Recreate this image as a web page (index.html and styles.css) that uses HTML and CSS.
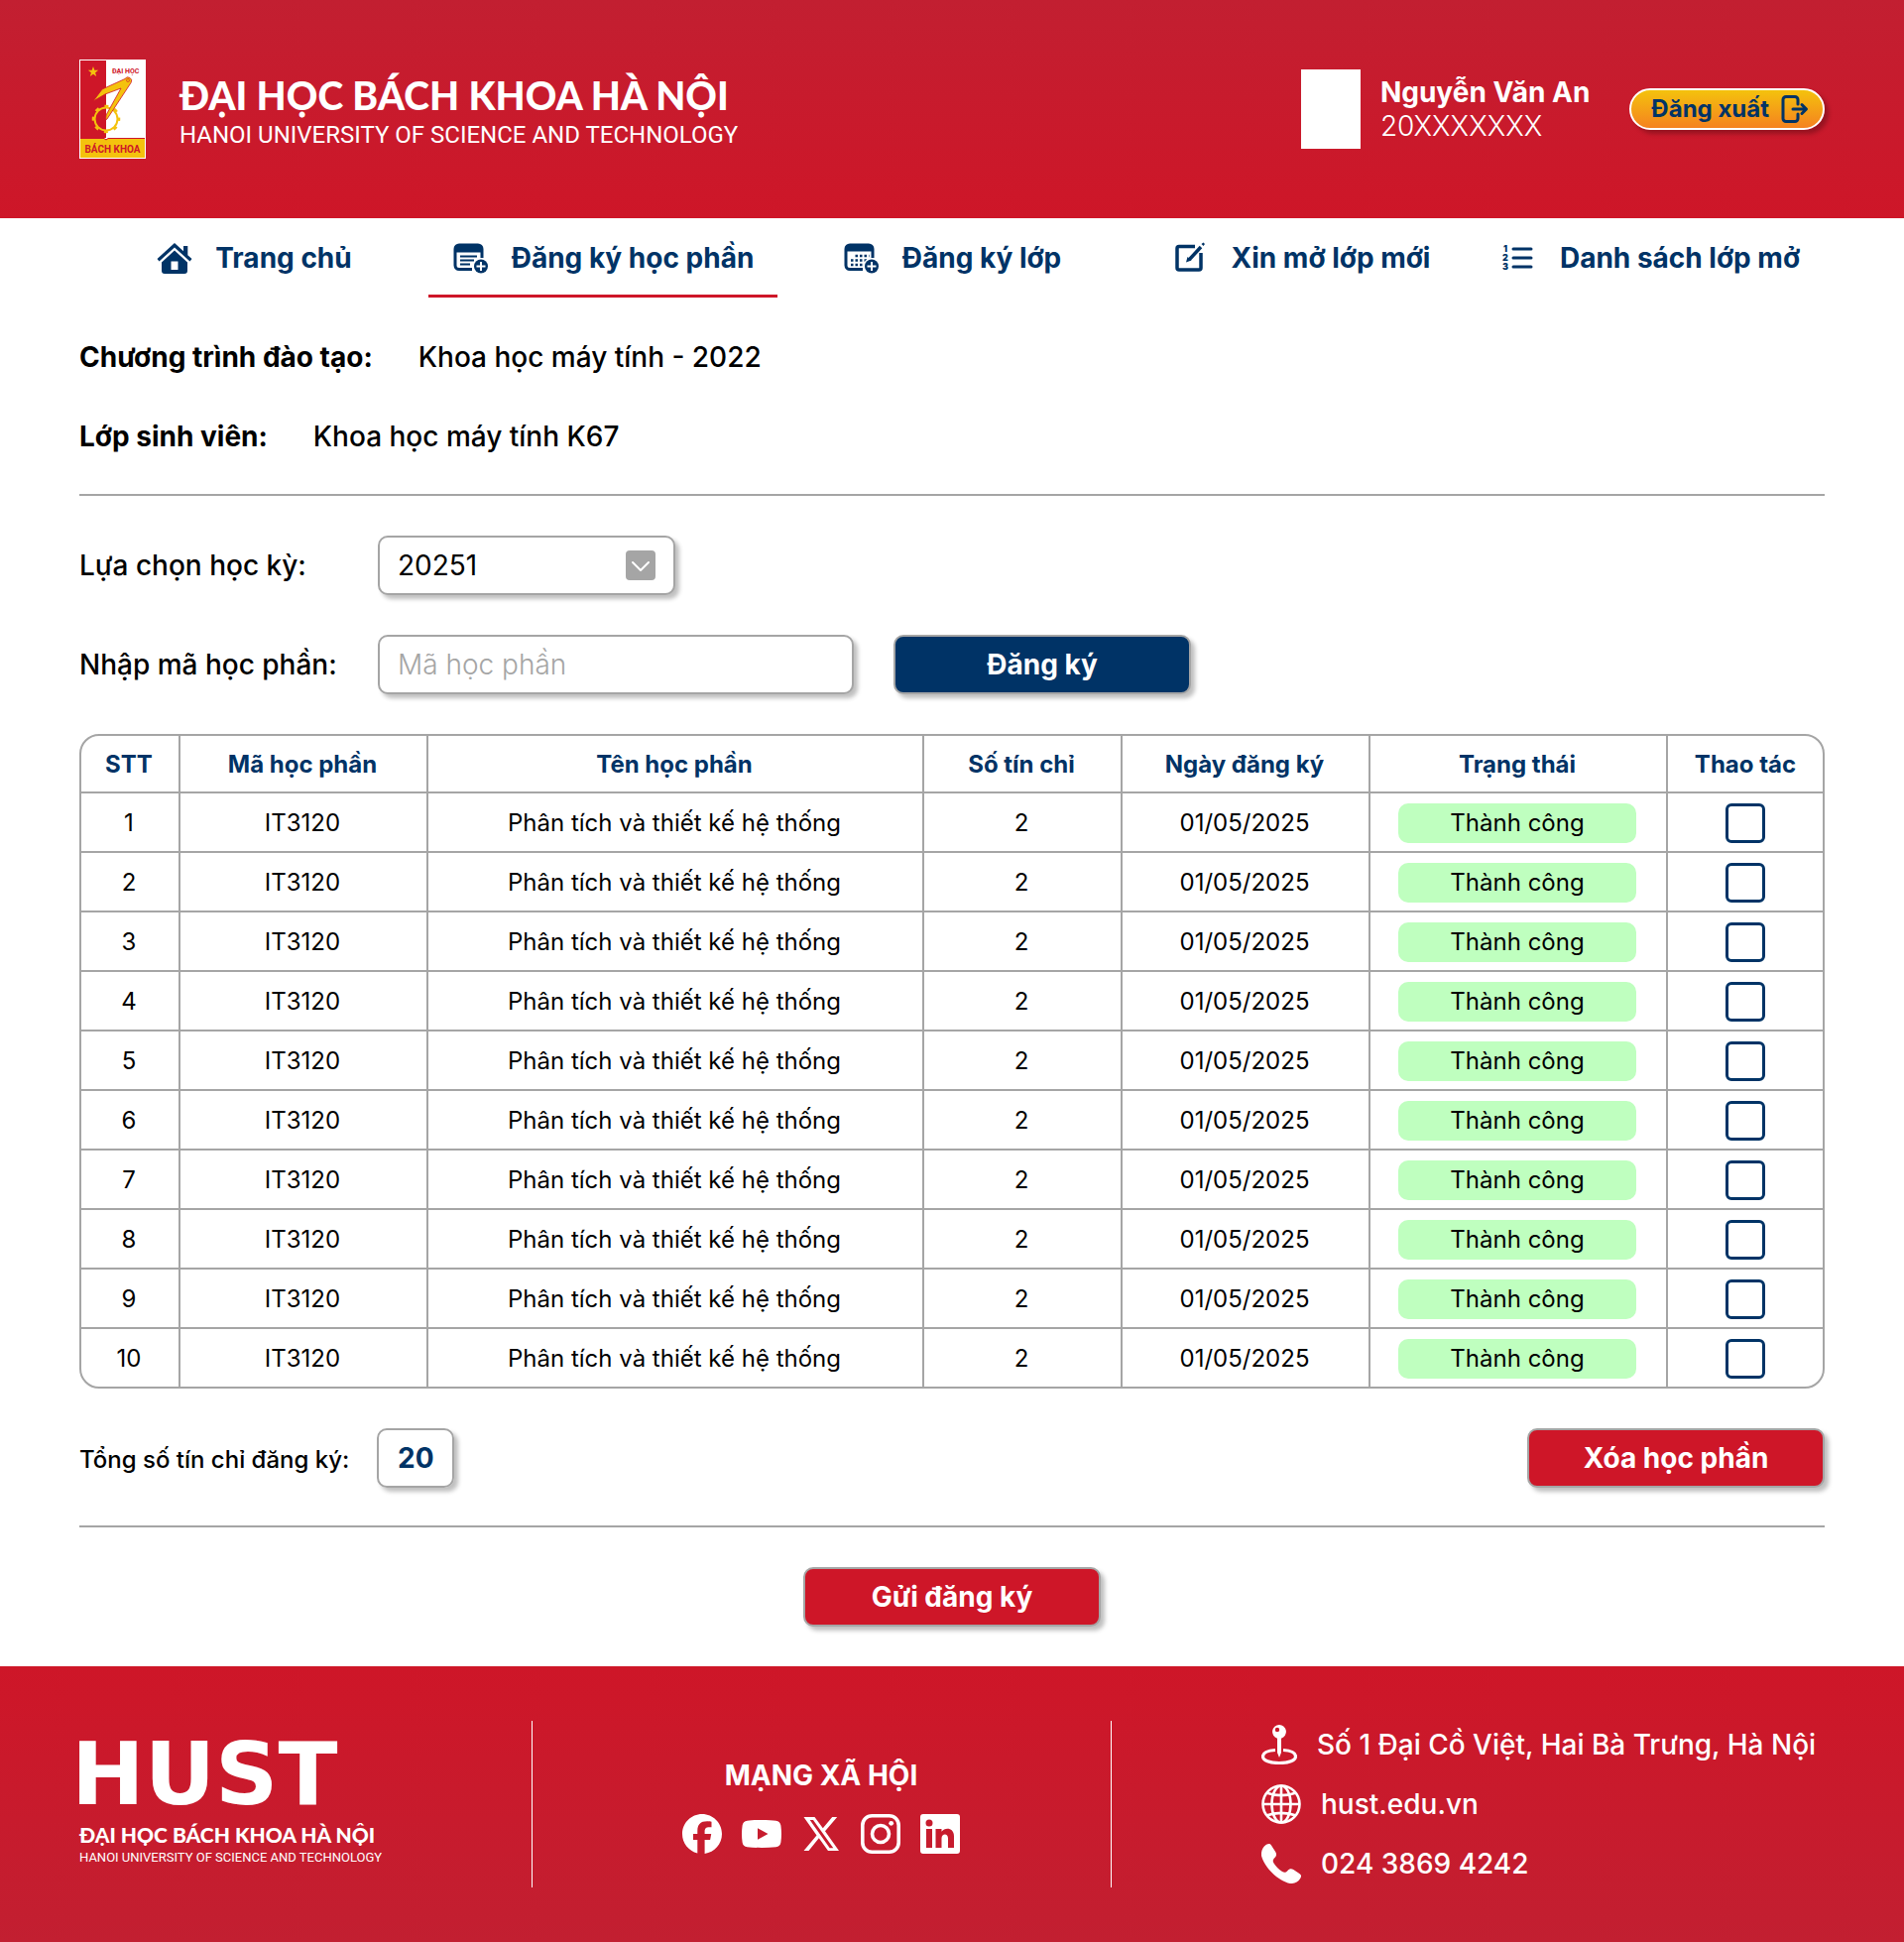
FILE: index.html
```html
<!DOCTYPE html>
<html lang="vi">
<head>
<meta charset="utf-8">
<meta name="viewport" content="width=device-width, initial-scale=1">
<title>Đăng ký học phần</title>
<link rel="stylesheet" href="styles.css">
</head>
<body>
<header class="site-header">
  <a class="brand" href="#">
    <svg class="emblem" viewBox="0 0 67 100" aria-hidden="true">
      <rect width="67" height="100" fill="#fff"/>
      <rect x="1" y="1" width="26" height="78" fill="#ce1628"/>
      <rect x="1" y="80" width="65" height="19" fill="#f4c20d"/>
      <path d="M1 79.500H25L27 81l2-1.500H66" fill="none" stroke="#ce1628"/>
      <path d="M14 7l1.300 3.700 3.900.1-3.100 2.400 1.100 3.800-3.200-2.200-3.200 2.200 1.100-3.800-3.100-2.400 3.900-.1z" fill="#f4c20d"/>
      <circle cx="27" cy="60" r="11.500" fill="none" stroke="#f4c20d" stroke-width="2"/>
      <circle cx="27" cy="60" r="13" fill="none" stroke="#f4c20d" stroke-width="2.500" stroke-dasharray="4 6.210" stroke-dashoffset="2"/>
      <path d="M46 19.500a3.600 3.600 0 1 1 6 4L28 60l-1.500 1 .5-5 15-27-16 6-12 7 9-12z" fill="#f4c20d" stroke="#ce1628" stroke-width=".8"/>
      <circle cx="49" cy="21" r="1.500" fill="none" stroke="#ce1628" stroke-width=".6"/>
      <text x="33" y="13.500" class="emblem-top">ĐẠI HỌC</text>
      <text x="33.500" y="94" class="emblem-name">BÁCH KHOA</text>
    </svg>
    <span class="wordmark">
      <span class="wordmark-vi">ĐẠI HỌC BÁCH KHOA HÀ NỘI</span>
      <span class="wordmark-en">HANOI UNIVERSITY OF SCIENCE AND TECHNOLOGY</span>
    </span>
  </a>
  <div class="account">
    <div class="avatar"></div>
    <div class="student">
      <div class="student-name">Nguyễn Văn An</div>
      <div class="student-id">20XXXXXXX</div>
    </div>
    <button class="logout" type="button">Đăng xuất
      <svg width="28" height="28" viewBox="0 0 28 28" fill="none" stroke="currentColor" stroke-width="3" stroke-linecap="round" stroke-linejoin="round" aria-hidden="true"><path d="M17 9V4.500a3 3 0 0 0-3-3H5a3 3 0 0 0-3 3v19a3 3 0 0 0 3 3h9a3 3 0 0 0 3-3V19M12 14h13M21 9.500l4.500 4.500-4.500 4.500"/></svg>
    </button>
  </div>
</header>

<nav class="main-nav">
  <a href="#"><svg viewBox="0 0 40 40" fill="currentColor" aria-hidden="true"><path d="M19 5L1.500 21l2 2.500L19 9.500l15.500 14 2-2.500-4.200-3.800V8H28v5.200z"/><path d="M19 12.500L6 24.500v8.500a3 3 0 0 0 3 3h20a3 3 0 0 0 3-3V24.500zm3.500 19.500h-7V23.500h7z"/></svg>Trang chủ</a>
  <a class="active" href="#" aria-current="page"><svg viewBox="0 0 40 40" fill="none" stroke="currentColor" aria-hidden="true"><path d="M20 31.500H7a4 4 0 0 1-4-4V11a4 4 0 0 1 4-4h19a4 4 0 0 1 4 4v9" stroke-width="3"/><path d="M3 14V11a4 4 0 0 1 4-4h19a4 4 0 0 1 4 4v3z" fill="currentColor"/><path d="M8 18.500h17M8 22.500h14M8 26.500h10" stroke-width="2"/><circle cx="29" cy="28.500" r="8.500" fill="#fff" stroke="none"/><circle cx="29" cy="28.500" r="7" fill="currentColor" stroke="none"/><path d="M29 24v9M24.500 28.500h9" stroke="#fff" stroke-width="2"/></svg>Đăng ký học phần</a>
  <a href="#"><svg viewBox="0 0 40 40" fill="none" stroke="currentColor" aria-hidden="true"><path d="M20 31.500H7a4 4 0 0 1-4-4V11a4 4 0 0 1 4-4h19a4 4 0 0 1 4 4v9" stroke-width="3"/><path d="M3 13V11a4 4 0 0 1 4-4h19a4 4 0 0 1 4 4v2z" fill="currentColor"/><path d="M12.500 18h14M8 22.500h18M8 27h12" stroke-width="2.500" stroke-dasharray="2.500 2"/><circle cx="29" cy="28.500" r="8.500" fill="#fff" stroke="none"/><circle cx="29" cy="28.500" r="7" fill="currentColor" stroke="none"/><path d="M29 24v9M24.500 28.500h9" stroke="#fff" stroke-width="2"/></svg>Đăng ký lớp</a>
  <a href="#"><svg viewBox="0 0 40 40" fill="none" stroke="currentColor" stroke-width="3.500" aria-hidden="true"><path d="M23 8.500H7a2 2 0 0 0-2 2v19.500a2 2 0 0 0 2 2h20a2 2 0 0 0 2-2V15"/><path d="M29 9L17.500 21.500"/><path d="M15.500 19l4 3.500-5.500 2zM29.500 6l2-1.500 1.500 1.500-1.500 2z" fill="currentColor" stroke="none"/></svg>Xin mở lớp mới</a>
  <a href="#"><svg viewBox="0 0 40 40" aria-hidden="true"><path d="M13 11h18M13 20h18M13 29h18" stroke="currentColor" stroke-width="3" stroke-linecap="round"/><g class="list-digits"><text x="5" y="14">1</text><text x="5" y="23">2</text><text x="5" y="32">3</text></g></svg>Danh sách lớp mở</a>
</nav>

<main class="content">
  <dl class="profile">
    <div><dt>Chương trình đào tạo:</dt><dd>Khoa học máy tính - 2022</dd></div>
    <div><dt>Lớp sinh viên:</dt><dd>Khoa học máy tính K67</dd></div>
  </dl>
  <hr>
  <form class="register">
    <label for="term">Lựa chọn học kỳ:</label>
    <div class="row">
      <span class="select-box">
        <select id="term" class="field"><option>20251</option></select>
        <svg viewBox="0 0 30 30" aria-hidden="true"><rect width="30" height="30" rx="4" fill="#a5a5a5"/><path d="M7 12l8 8 8-8" fill="none" stroke="#fff" stroke-width="2" stroke-linecap="round" stroke-linejoin="round"/></svg>
      </span>
    </div>
    <label for="code">Nhập mã học phần:</label>
    <div class="row">
      <input id="code" class="field code" type="text" placeholder="Mã học phần">
      <button class="btn btn-navy" type="button">Đăng ký</button>
    </div>
  </form>

  <div class="table-frame">
    <table>
      <colgroup><col class="c-index"><col class="c-code"><col><col class="c-credit"><col class="c-date"><col class="c-status"><col class="c-action"></colgroup>
      <thead><tr><th scope="col">STT</th><th scope="col">Mã học phần</th><th scope="col">Tên học phần</th><th scope="col">Số tín chỉ</th><th scope="col">Ngày đăng ký</th><th scope="col">Trạng thái</th><th scope="col">Thao tác</th></tr></thead>
      <tbody>
        <tr><td>1</td><td>IT3120</td><td>Phân tích và thiết kế hệ thống</td><td>2</td><td>01/05/2025</td><td><span class="badge">Thành công</span></td><td><input type="checkbox" aria-label="Chọn học phần 1"></td></tr>
        <tr><td>2</td><td>IT3120</td><td>Phân tích và thiết kế hệ thống</td><td>2</td><td>01/05/2025</td><td><span class="badge">Thành công</span></td><td><input type="checkbox" aria-label="Chọn học phần 2"></td></tr>
        <tr><td>3</td><td>IT3120</td><td>Phân tích và thiết kế hệ thống</td><td>2</td><td>01/05/2025</td><td><span class="badge">Thành công</span></td><td><input type="checkbox" aria-label="Chọn học phần 3"></td></tr>
        <tr><td>4</td><td>IT3120</td><td>Phân tích và thiết kế hệ thống</td><td>2</td><td>01/05/2025</td><td><span class="badge">Thành công</span></td><td><input type="checkbox" aria-label="Chọn học phần 4"></td></tr>
        <tr><td>5</td><td>IT3120</td><td>Phân tích và thiết kế hệ thống</td><td>2</td><td>01/05/2025</td><td><span class="badge">Thành công</span></td><td><input type="checkbox" aria-label="Chọn học phần 5"></td></tr>
        <tr><td>6</td><td>IT3120</td><td>Phân tích và thiết kế hệ thống</td><td>2</td><td>01/05/2025</td><td><span class="badge">Thành công</span></td><td><input type="checkbox" aria-label="Chọn học phần 6"></td></tr>
        <tr><td>7</td><td>IT3120</td><td>Phân tích và thiết kế hệ thống</td><td>2</td><td>01/05/2025</td><td><span class="badge">Thành công</span></td><td><input type="checkbox" aria-label="Chọn học phần 7"></td></tr>
        <tr><td>8</td><td>IT3120</td><td>Phân tích và thiết kế hệ thống</td><td>2</td><td>01/05/2025</td><td><span class="badge">Thành công</span></td><td><input type="checkbox" aria-label="Chọn học phần 8"></td></tr>
        <tr><td>9</td><td>IT3120</td><td>Phân tích và thiết kế hệ thống</td><td>2</td><td>01/05/2025</td><td><span class="badge">Thành công</span></td><td><input type="checkbox" aria-label="Chọn học phần 9"></td></tr>
        <tr><td>10</td><td>IT3120</td><td>Phân tích và thiết kế hệ thống</td><td>2</td><td>01/05/2025</td><td><span class="badge">Thành công</span></td><td><input type="checkbox" aria-label="Chọn học phần 10"></td></tr>
      </tbody>
    </table>
  </div>

  <div class="summary">
    <div class="total"><span class="total-label">Tổng số tín chỉ đăng ký:</span><output class="total-value">20</output></div>
    <button class="btn btn-red" type="button">Xóa học phần</button>
  </div>
  <hr>
  <div class="submit-row"><button class="btn btn-red" type="button">Gửi đăng ký</button></div>
</main>

<footer class="site-footer">
  <div class="footer-brand">
    <svg class="hust" viewBox="0 0 304 60"><text x="-8" y="62">HUST</text></svg>
    <div class="footer-vi">ĐẠI HỌC BÁCH KHOA HÀ NỘI</div>
    <div class="footer-en">HANOI UNIVERSITY OF SCIENCE AND TECHNOLOGY</div>
  </div>
  <div class="rule"></div>
  <div class="social">
    <h2>MẠNG XÃ HỘI</h2>
    <div class="social-links">
      <a href="#" aria-label="Facebook"><svg viewBox="0 0 40 40" fill="currentColor"><path d="M40 20.100C40 9 31 0 20 0S0 9 0 20.100C0 29.500 6.500 37.400 15.300 39.600V26H11v-6h4.300v-2.700c0-6.800 3.100-10 9.800-10 1.300 0 3.500.2 4.400.5v5.500c-.5 0-1.300-.1-2.300-.1-3.300 0-4.600 1.200-4.600 4.500V20h6.600l-1.100 6h-5.500v13.900C32.500 38.700 40 30.300 40 20.100z"/></svg></a>
      <a href="#" aria-label="YouTube"><svg viewBox="0 0 40 40" fill="currentColor"><path fill-rule="evenodd" d="M20 6c6 0 11.500.2 14.500.7 2.800.4 4.500 2.100 4.900 4.900.8 5.500.8 11.300 0 16.800-.4 2.800-2.100 4.500-4.900 4.900-9.500.9-19.500.9-29 0-2.800-.4-4.500-2.100-4.900-4.900-.8-5.500-.8-11.300 0-16.800.4-2.800 2.100-4.500 4.900-4.900C8.500 6.200 14 6 20 6zm-4 8.200v11.600L26.500 20z"/></svg></a>
      <a href="#" aria-label="X"><svg viewBox="0 0 40 40" fill="currentColor"><path fill-rule="evenodd" d="M2.500 3h11l8.300 11.200L31.200 3h5L24 17.300 38 37H27l-9.200-12.800L7.500 37h-5l13-15.600zm6.200 3l20 28.200h3.600L12 6z"/></svg></a>
      <a href="#" aria-label="Instagram"><svg viewBox="0 0 40 40" fill="none" stroke="currentColor" stroke-width="3.600"><rect x="1.800" y="1.800" width="36.400" height="36.400" rx="9.500"/><circle cx="20" cy="20" r="8.500"/><circle cx="30.700" cy="9.300" r="2.400" fill="currentColor" stroke="none"/></svg></a>
      <a href="#" aria-label="LinkedIn"><svg viewBox="0 0 40 40" fill="currentColor"><path fill-rule="evenodd" d="M3 0h34a3 3 0 0 1 3 3v34a3 3 0 0 1-3 3H3a3 3 0 0 1-3-3V3a3 3 0 0 1 3-3zm3 15v19h6V15zm3-9.500a3.500 3.500 0 1 0 0 7 3.500 3.500 0 0 0 0-7zM15.500 15v19h6V24.500c0-5 6.500-5.500 6.500 0V34h6V22.500c0-9-9-9.500-12.500-4.800V15z"/></svg></a>
    </div>
  </div>
  <div class="rule"></div>
  <address class="contact">
    <div><svg class="pin" viewBox="0 0 36 40" fill="none" stroke="currentColor" aria-hidden="true"><path d="M14 25.500C6 26 1.500 28.500 1.500 32c0 4 7 6.500 16.500 6.500S34.500 36 34.500 32c0-3.500-4.500-6-12.500-6.500" stroke-width="3.200"/><path fill="currentColor" stroke="none" fill-rule="evenodd" d="M18 0a7 7 0 0 1 2 13.700V28l-2 5-2-5V13.700A7 7 0 0 1 18 0zm-2 2.800a2.200 2.200 0 1 0 0 4.400 2.200 2.200 0 0 0 0-4.400z"/></svg><span>Số 1 Đại Cồ Việt, Hai Bà Trưng, Hà Nội</span></div>
    <div><svg viewBox="0 0 40 40" fill="none" stroke="currentColor" stroke-width="2.600" aria-hidden="true"><circle cx="20" cy="20" r="18.500"/><ellipse cx="20" cy="20" rx="9.500" ry="18.500"/><path d="M20 1.500v37M1.500 20h37M5 8.500c9 3.500 21 3.500 30 0M5 31.500c9-3.500 21-3.500 30 0"/></svg><a href="#">hust.edu.vn</a></div>
    <div><svg viewBox="0 0 40 40" fill="currentColor" aria-hidden="true"><path d="M5 .8C7.500-.5 9-.2 10.300 2l4 6.300c1.300 2.300.8 3.900-.8 5.700-2 2-2.300 3.300-1 5.500 2.300 3.500 5 6.200 8.500 8.500 2 1.200 3.500 1 5.300-.8 2-2.200 3.800-2.500 6-1.200l6 4c2 1.400 2.200 2.500 1 4.700C37 38.500 33.500 40.300 29 40 17 37.500 3 24 0 12 -.5 7 1.500 3 5 .8z"/></svg><a href="#">024 3869 4242</a></div>
  </address>
</footer>
</body>
</html>
```
FILE: styles.css
```css
:root {
  --navy: #003366;
  --red: #ce1628;
  --red-dark: #c21f31;
  --grey: #a5a5a5;
  --shadow: 4px 4px 4px rgba(0, 0, 0, .25);
}

* { box-sizing: border-box; }

body {
  margin: 0;
  background: #fff;
  color: #000;
  font: 28px/34px Inter, "Liberation Sans", sans-serif;
}

a { color: inherit; text-decoration: none; }
button, input, select { font: inherit; }
hr { margin: 0; border: 0; border-top: 2px solid var(--grey); }

.site-header {
  display: flex;
  align-items: center;
  justify-content: space-between;
  padding: 60px 80px;
  background: linear-gradient(var(--red-dark), var(--red));
  color: #fff;
}

.brand { display: flex; align-items: center; gap: 34px; }
.emblem { width: 67px; height: 100px; }
.emblem text { font-family: "Liberation Sans Narrow", Roboto, sans-serif; font-weight: 700; fill: var(--red); }
.emblem-top { font-size: 7px; }
.emblem-name { font-size: 10px; text-anchor: middle; }
.wordmark { display: flex; flex-direction: column; padding-top: 8px; white-space: nowrap; }
.wordmark-vi { font: 900 39px/44px Lato, sans-serif; }
.wordmark-en { font: 400 24px/36px Roboto, sans-serif; }

.account { display: flex; align-items: center; }
.avatar { width: 60px; height: 80px; background: #fff; }
.student { margin: 0 40px 0 20px; }
.student-name { font-weight: 700; }
.student-id { font-weight: 300; }
.logout {
  display: flex;
  align-items: center;
  gap: 12px;
  height: 42px;
  padding: 0 14px 0 20px;
  border: 2px solid #fff;
  border-radius: 21px;
  background: linear-gradient(#f4c20d, #f58220);
  box-shadow: var(--shadow);
  color: var(--navy);
  font-size: 24px;
  font-weight: 700;
  white-space: nowrap;
}

.main-nav { display: grid; grid-template-columns: repeat(5, 1fr); padding: 0 80px; }
.main-nav a {
  display: flex;
  align-items: center;
  justify-content: center;
  gap: 20px;
  height: 80px;
  border-block: 3px solid transparent;
  color: var(--navy);
  font-weight: 700;
  white-space: nowrap;
}
.main-nav .active { border-bottom-color: var(--red); }
.main-nav svg { width: 40px; height: 40px; }
.list-digits { font-size: 9px; font-weight: 900; fill: currentColor; text-anchor: middle; }

.content { display: flex; flex-direction: column; gap: 40px; padding: 40px 80px; }

.profile { display: flex; flex-direction: column; gap: 40px; margin: 0 0 -2px; }
.profile div { display: flex; gap: 46px; height: 40px; align-items: center; }
.profile dt { font-weight: 700; }
.profile dd { margin: 0; font-weight: 500; }

.register { display: grid; grid-template-columns: 261px 1fr; align-items: center; gap: 40px; white-space: nowrap; }
.register label { font-weight: 500; }
.row { display: flex; gap: 40px; }
.field {
  width: 100%;
  height: 60px;
  padding: 0 18px;
  border: 2px solid var(--grey);
  border-radius: 10px;
  background: #fff;
  box-shadow: var(--shadow);
  color: #000;
  appearance: none;
}
.code { width: 480px; }
.code::placeholder { color: var(--grey); font-weight: 300; opacity: 1; }
.select-box { position: relative; width: 300px; }
.select-box svg { position: absolute; top: 15px; right: 20px; width: 30px; height: 30px; pointer-events: none; }

.btn {
  width: 300px;
  height: 60px;
  border: 2px solid var(--grey);
  border-radius: 10px;
  box-shadow: var(--shadow);
  color: #fff;
  font-weight: 700;
}
.btn-navy { background: var(--navy); }
.btn-red { background: var(--red); }

.table-frame { border: 2px solid var(--grey); border-radius: 20px; overflow: hidden; }
table { width: 100%; border-spacing: 0; table-layout: fixed; font-size: 24px; line-height: 30px; text-align: center; }
.c-index { width: 100px; }
.c-code, .c-date { width: 250px; }
.c-credit { width: 200px; }
.c-status { width: 300px; }
.c-action { width: 156px; }
th, td { height: 60px; padding: 2px 2px 0 0; border: solid var(--grey); border-width: 0 2px 2px 0; }
th { height: 58px; color: var(--navy); font-weight: 700; }
th:last-child, td:last-child { padding-right: 0; border-right: 0; }
tr:last-child td { height: 58px; border-bottom: 0; }
.badge { display: block; margin: 0 auto; width: 240px; border-radius: 10px; background: #bfffbf; line-height: 40px; }
input[type="checkbox"] {
  display: block;
  width: 40px;
  height: 40px;
  margin: 0 auto;
  border: 3px solid var(--navy);
  border-radius: 6px;
  background: #fff;
  appearance: none;
}

.summary { display: flex; align-items: center; justify-content: space-between; margin-bottom: -2px; }
.total { display: flex; align-items: center; gap: 28px; font-size: 24px; }
.total-label { padding-top: 4px; font-weight: 500; }
.total-value {
  width: 78px;
  border: 2px solid var(--grey);
  border-radius: 10px;
  box-shadow: var(--shadow);
  color: var(--navy);
  font-size: 28px;
  font-weight: 700;
  line-height: 56px;
  text-align: center;
}
.submit-row { display: flex; justify-content: center; }

.site-footer {
  display: flex;
  align-items: center;
  justify-content: space-between;
  padding: 55px 80px;
  background: linear-gradient(var(--red), var(--red-dark));
  color: #fff;
  white-space: nowrap;
}
.footer-brand { display: flex; flex-direction: column; width: 304px; }
.hust { width: 304px; height: 60px; margin-bottom: 18px; overflow: visible; fill: currentColor; font: 700 88px "DejaVu Sans", sans-serif; }
.footer-vi { font: 900 21px/30px Lato, sans-serif; }
.footer-en { font: 400 13px/16px Roboto, sans-serif; }
.rule { width: 1px; height: 168px; background: #fff; }
.social { display: flex; flex-direction: column; align-items: center; gap: 22px; padding-top: 4px; }
.social h2 { margin: 0; font-size: 28px; font-weight: 700; }
.social-links { display: flex; gap: 20px; }
.social-links svg { display: block; width: 40px; height: 40px; }
.contact { display: flex; flex-direction: column; gap: 20px; min-width: 568px; font-style: normal; font-weight: 500; }
.contact div { display: flex; align-items: center; gap: 20px; }
.contact svg { width: 40px; height: 40px; }
.contact .pin { width: 36px; }
```
